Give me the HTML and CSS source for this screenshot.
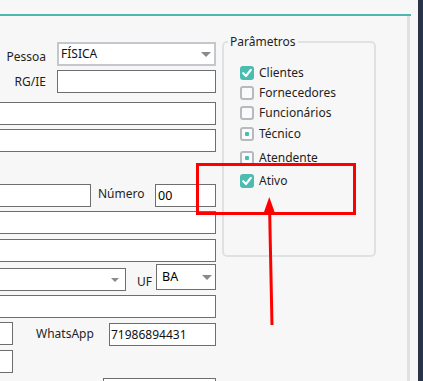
FILE: index.html
```html
<!DOCTYPE html>
<html lang="pt-BR">
<head>
<meta charset="utf-8">
<title>Cadastro</title>
<link rel="stylesheet" href="styles.css">
</head>
<body>
<div class="window">
  <div class="main">
    <div class="topbar"></div>
    <div class="accent"></div>
    <div class="body">
      <div class="content">
        <form class="form">
          <div class="row r-pessoa">
            <span class="label lbl-pessoa">Pessoa</span>
            <div class="select select-light w-pessoa"><span class="val">FÍSICA</span><i class="caret"></i></div>
          </div>
          <div class="row r-gap4">
            <span class="label lbl-rg">RG/IE</span>
            <div class="field w-rg"></div>
          </div>
          <div class="row r-gap9"><div class="field full"></div></div>
          <div class="row r-gap4"><div class="field full"></div></div>
          <div class="row r-gap32">
            <div class="field w-rua"></div>
            <span class="label lbl-num">Número</span>
            <div class="field w-num push"><span class="val val-num">00</span></div>
          </div>
          <div class="row r-gap4"><div class="field full"></div></div>
          <div class="row r-gap5"><div class="field full"></div></div>
          <div class="row r-uf">
            <div class="select field w-cidade"><span class="val"></span><i class="caret caret-c"></i></div>
            <span class="label lbl-uf">UF</span>
            <div class="select field w-uf push"><span class="val val-uf">BA</span><i class="caret caret-uf"></i></div>
          </div>
          <div class="row r-gap4"><div class="field full"></div></div>
          <div class="row r-gap3 r-whats">
            <div class="field w-small"></div>
            <span class="label lbl-whats">WhatsApp</span>
            <div class="field w-whats push"><span class="val val-whats">71986894431</span></div>
          </div>
          <div class="row r-gap4"><div class="field w-small"></div></div>
          <div class="row r-gap5"><div class="field w-last push"></div></div>
        </form>
        <fieldset class="params">
          <legend>Parâmetros</legend>
          <div class="opt"><span class="box on"><svg viewBox="0 0 14 14" width="14" height="14"><polyline points="3.2,7.2 6,10 10.8,3.8" fill="none" stroke="#fff" stroke-width="2.2" stroke-linecap="round" stroke-linejoin="round"/></svg></span><span class="opt-text">Clientes</span></div>
          <div class="opt"><span class="box"></span><span class="opt-text">Fornecedores</span></div>
          <div class="opt"><span class="box"></span><span class="opt-text">Funcionários</span></div>
          <div class="opt opt-tec"><span class="box"><i class="dot"></i></span><span class="opt-text">Técnico</span></div>
          <div class="opt opt-ate"><span class="box"><i class="dot"></i></span><span class="opt-text">Atendente</span></div>
          <div class="opt opt-ati"><span class="box on"><svg viewBox="0 0 14 14" width="14" height="14"><polyline points="3.2,7.2 6,10 10.8,3.8" fill="none" stroke="#fff" stroke-width="2.2" stroke-linecap="round" stroke-linejoin="round"/></svg></span><span class="opt-text">Ativo</span></div>
        </fieldset>
      </div>
      <div class="vline"></div>
    </div>
  </div>
  <div class="navy"></div>
  <div class="highlight"></div>
  <svg class="arrow" viewBox="0 0 423 381" width="423" height="381">
    <line x1="272" y1="325" x2="269.6" y2="209" stroke="#ff0000" stroke-width="3"/>
    <polygon points="269.3,197 264,212 274.6,212" fill="#ff0000"/>
  </svg>
</div>
</body>
</html>
```

FILE: styles.css
```css
* { box-sizing: border-box; margin: 0; padding: 0; }
html, body { width: 423px; height: 381px; overflow: hidden; }
body {
  background: #f7f7f7;
  font-family: "Noto Sans", "Open Sans", sans-serif;
  font-size: 12px;
  color: #1f1f1f;
}
.window { position: relative; display: flex; width: 423px; height: 381px; }
.main { width: 418px; display: flex; flex-direction: column; flex: none; }
.topbar { height: 14px; flex: none; }
.accent { height: 2px; width: 411px; background: #4cb8ad; flex: none; }
.body { flex: 1; display: flex; min-height: 0; }
.content { width: 407px; display: flex; gap: 6px; overflow: hidden; flex: none; }
.vline { width: 3px; background: #dfe2e5; flex: none; }
.navy { width: 5px; background: #2a3449; flex: none; }

/* form column (partly scrolled off the left edge) */
.form { width: 240px; margin-left: -24px; display: flex; flex-direction: column; flex: none; }
.row { display: flex; align-items: center; flex: none; }
.r-pessoa { margin-top: 26px; align-items: flex-start; }
.r-gap3 { margin-top: 3px; }
.r-gap4 { margin-top: 4px; }
.r-gap5 { margin-top: 5px; }
.r-gap9 { margin-top: 9px; }
.r-gap32 { margin-top: 32px; }
.r-uf { margin-top: 2px; height: 27px; align-items: flex-start; }

.label { line-height: 16px; white-space: nowrap; color: #1f1f1f; }
.lbl-pessoa { width: 70px; text-align: right; margin-top: 7px; }
.lbl-rg { width: 70px; text-align: right; }
.lbl-num { margin-left: 7px; margin-top: -3px; }
.lbl-uf { margin-left: 11px; margin-top: 10px; }
.lbl-whats { margin-left: 23px; }
.push { margin-left: auto; }

.field {
  height: 23px;
  background: #fff;
  border: 1px solid #6e6e6e;
  flex: none;
  display: flex;
  align-items: center;
}
.full { width: 240px; }
.w-rg { width: 159px; margin-left: 11px; }
.w-rua { width: 115px; }
.w-num { width: 61px; }
.w-cidade { width: 150px; margin-top: 4px; }
.w-uf { width: 60px; height: 26px; }
.w-small { width: 37px; }
.w-whats { width: 107px; margin-top: 2px; }
.w-last { width: 113px; }

.val { line-height: 16px; white-space: nowrap; color: #111; flex: 1; }
.val-num { padding-left: 2px; font-size: 12.5px; color: #000; }
.val-uf { padding-left: 5px; font-size: 12.5px; color: #000; }
.val-whats { padding-left: 1px; }

.select { display: flex; align-items: center; }
.select-light {
  height: 24px;
  margin-left: 11px;
  width: 159px;
  background: #fff;
  border: 2px solid #c4c7cb;
  padding-left: 2px;
  padding-right: 3px;
}
.caret {
  display: block;
  width: 0;
  height: 0;
  border-left: 5.5px solid transparent;
  border-right: 5.5px solid transparent;
  border-top: 5px solid #8a8a8a;
  flex: none;
}
.caret-c { margin-right: 6px; border-left-width: 4.5px; border-right-width: 4.5px; border-top-width: 4px; }
.caret-uf { margin-right: 3px; }

/* parameters group */
.params {
  width: 154px;
  height: 223px;
  margin-top: 18px;
  border: 2px solid #dfe2e5;
  border-radius: 5px;
  padding: 13px 4px 0;
  flex: none;
}
.params legend {
  font-size: 12px;
  line-height: 16px;
  color: #1f1f1f;
  padding: 0 2px;
}
.opt { display: flex; align-items: center; height: 20px; margin-left: 12px; gap: 5px; }
.opt-tec { margin-top: 1px; }
.opt-ate { margin-top: 4px; }
.opt-ati { margin-top: 3px; }
.opt-text { line-height: 16px; white-space: nowrap; color: #1f1f1f; }
.box {
  width: 14px;
  height: 14px;
  border: 2px solid #b6b9bd;
  border-radius: 3px;
  background: #fafafa;
  display: flex;
  align-items: center;
  justify-content: center;
  flex: none;
}
.box.on { background: #4bbcaf; border: none; }
.box svg { display: block; }
.dot { display: block; width: 4px; height: 4px; border-radius: 1px; background: #4bbcaf; }

/* annotations */
.highlight {
  position: absolute;
  left: 196px;
  top: 163px;
  width: 160px;
  height: 52px;
  border: 3px solid #ff0000;
}
.arrow { position: absolute; left: 0; top: 0; pointer-events: none; }
```
